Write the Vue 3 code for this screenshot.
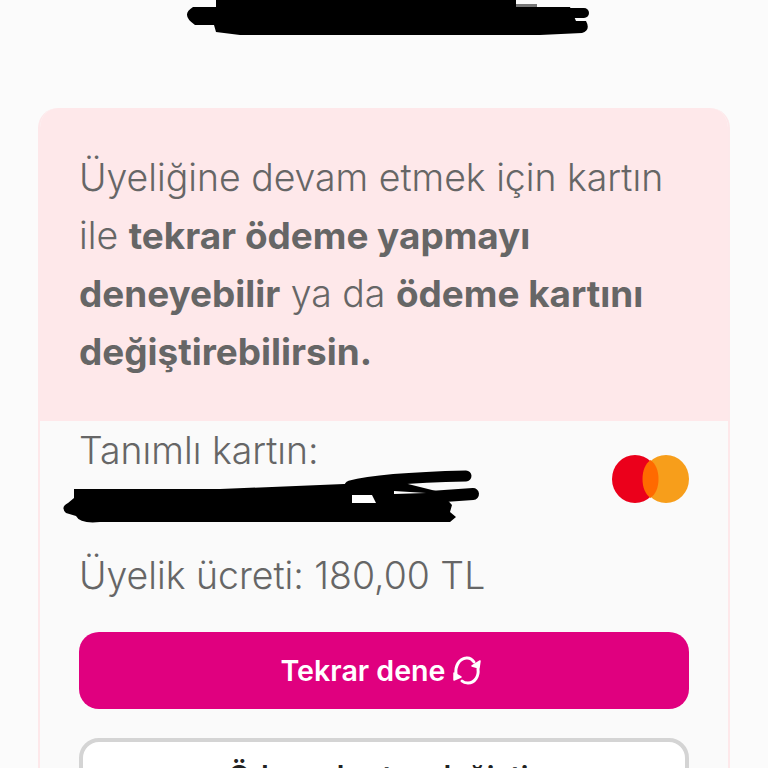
<template>
  <main class="page">
    <section class="card">
      <div class="notice">
        <p>
          Üyeliğine devam etmek için kartın ile <b>tekrar ödeme yapmayı deneyebilir</b> ya da
          <b>ödeme kartını değiştirebilirsin.</b>
        </p>
      </div>

      <div class="details">
        <div class="saved-card">
          <span>Tanımlı kartın:</span>
          <svg class="mastercard" width="77" height="48" viewBox="0 0 77 48">
            <ellipse cx="23" cy="24" rx="23" ry="24" fill="#eb001b" />
            <ellipse cx="54" cy="24" rx="23" ry="24" fill="#f79e1b" />
            <path d="M38.5 5C44 9 46.5 16 46.5 24C46.5 32 44 39 38.5 43C33 39 30.5 32 30.5 24C30.5 16 33 9 38.5 5Z" fill="#ff6a00" />
          </svg>
        </div>

        <p class="price">Üyelik ücreti: 180,00 TL</p>

        <button class="btn-retry">
          Tekrar dene
          <svg width="34" height="32" viewBox="0 0 34 32" fill="none" stroke="#fff" stroke-width="3" stroke-linecap="round" stroke-linejoin="round">
            <path d="M6 19C5 11 9 4 16 3C19 2.5 22 4 24 7" />
            <path d="M30 6L29 13L22 11Z" fill="#fff" stroke-width="1.5" />
            <path d="M28 14C29 21 25 28 18 28C15 28 13 27 12 26" />
            <path d="M4 18L4 25L11 22Z" fill="#fff" stroke-width="1.5" />
          </svg>
        </button>

        <button class="btn-change">Ödeme kartını değiştir</button>
      </div>
    </section>

    <!-- karalamalar: sayfanın üstünde duruyor -->
    <svg class="scribbles" width="768" height="768" viewBox="0 0 768 768" fill="none" stroke="#000" stroke-linecap="round">
      <path d="M216 0H516V8H216Z" fill="#000" stroke="none" />
      <path d="M516 4H537V8H516Z" fill="#777" stroke="none" />
      <path d="M193 7H570L576 21L586 21Q591 30 582 33L540 35H240L216 32L214 25H195Q180 15 193 7Z" fill="#000" stroke="none" />
      <path d="M566 13L584 13" stroke-width="10" />

      <path d="M350 486Q380 478 466 476" stroke-width="11" />
      <path d="M74 489H220L344 484L400 482L440 492L452 505L450 512L456 517L450 522H100Q80 524 76 516L66 513Q60 507 68 503L74 498Z" fill="#000" stroke="none" />
      <path d="M430 497L473 494" stroke-width="12" />
      <path d="M352 495H372L376 503H352Z" fill="#fff" stroke="none" />
      <path d="M394 491L426 493L394 494Z" fill="#fff" stroke="none" />
    </svg>
  </main>
</template>

<script setup>
</script>

<style>
html,
body {
  margin: 0;
  overflow: hidden;
}
</style>

<style scoped>
.page {
  position: relative;
  height: 768px;
  overflow: hidden;
  background: #fbfbfb;
  padding: 108px 38px 0;
  box-sizing: border-box;
  font-family: Inter, "Noto Sans", sans-serif;
  color: #666;
}
.scribbles {
  position: absolute;
  top: 0;
  left: 0;
  pointer-events: none;
}
.card {
  height: 700px;
  border-radius: 20px 20px 0 0;
  overflow: hidden;
  border: solid #fde8ea;
  border-width: 0 2px;
}
.notice {
  background: #fee8ea;
  height: 313px;
  padding: 41px 39px 0;
  box-sizing: border-box;
}
.notice p {
  margin: 0;
  font-size: 37.4px;
  line-height: 58px;
  font-weight: 350;
}
.notice b {
  font-size: 36.9px;
  font-weight: 700;
}
.details {
  background: #fafafa;
  padding: 8px 39px 0;
}
.saved-card {
  display: flex;
  justify-content: space-between;
  height: 97px;
  font-size: 37.4px;
  line-height: 44px;
  font-weight: 350;
}
.mastercard {
  margin-top: 26px;
}
.price {
  margin: 28px 0 34px;
  font-size: 37.4px;
  line-height: 44px;
  font-weight: 350;
}
.btn-retry {
  display: flex;
  align-items: center;
  justify-content: center;
  gap: 4px;
  width: 100%;
  height: 77px;
  padding: 0 4px 0 0;
  border: none;
  border-radius: 20px;
  background: #e0007f;
  color: #fff;
  font-family: inherit;
  font-size: 28.6px;
  font-weight: 600;
}
.btn-change {
  display: block;
  width: 100%;
  height: 77px;
  margin-top: 29px;
  padding-top: 1px;
  border: 4px solid #d4d4d4;
  border-radius: 20px;
  background: #fff;
  color: #222;
  font-family: inherit;
  font-size: 29.2px;
  font-weight: 600;
}
</style>
